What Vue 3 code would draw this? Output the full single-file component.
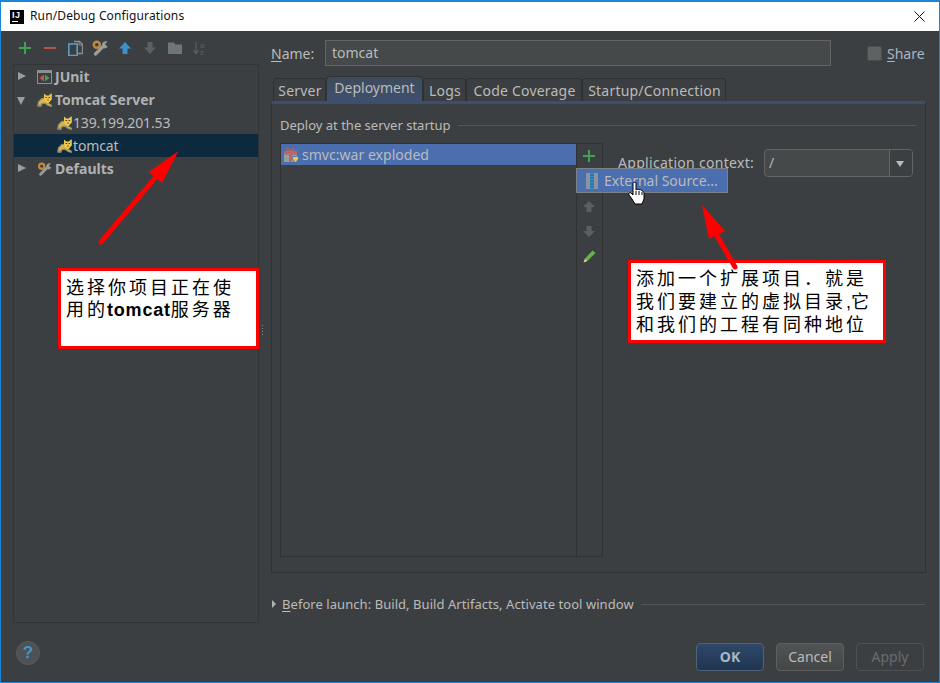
<script setup>
const tabs = [
  { label: 'Server', width: 53 },
  { label: 'Deployment', width: 97, active: true },
  { label: 'Logs', width: 43 },
  { label: 'Code Coverage', width: 116 },
  { label: 'Startup/Connection', width: 144 }
]
const toolbarIcons = ['plus', 'minus', 'copy', 'wrench', 'up', 'down', 'folder', 'sort']
const rows = [
  { label: 'JUnit', icon: 'junit', arrow: 'right', bold: true },
  { label: 'Tomcat Server', icon: 'cat', arrow: 'down', bold: true },
  { label: '139.199.201.53', icon: 'cat', child: true },
  { label: 'tomcat', icon: 'cat', child: true, selected: true },
  { label: 'Defaults', icon: 'wrench', arrow: 'right', bold: true }
]
</script>

<template>
  <div class="window">
    <svg class="defs" width="0" height="0" aria-hidden="true">
      <defs>
        <symbol id="cat" viewBox="0 0 15 14">
          <path d="M0 13.500 L1 8.500 L4.500 5 L9 4.500 L10.500 9 L15 12 L15 14 L11 13 L8 11 L5.500 11 L4 14 Z" fill="#8f8c76" />
          <path d="M1.500 11.500 L2.500 8.500 L5 6 L9 6 L10.500 10 L7 9.500 L4.500 10 L3 12 Z" fill="#dfb53c" />
          <path d="M7 .5 L9.300 2.500 H11.700 L14 .5 L14.800 .5 V6.500 L11.500 10 H10 L7 6.500 Z" fill="#ecc850" />
          <path d="M8.500 4.500 H10 M11.500 4.500 H13 M10.300 7 H11.700" stroke="#4a3d18" stroke-width="1" fill="none" />
          <path d="M9.500 10.500 L13.500 12.700" stroke="#dfb53c" stroke-width="1" fill="none" />
        </symbol>
        <symbol id="wrench" viewBox="0 0 16 16">
          <path d="M3.500 14 L12 5.500" stroke="#9a9c9e" stroke-width="3.200" stroke-linecap="round" />
          <path d="M10 4.500 C10.500 2 13 .8 15.500 1.500 L13 4 L13.500 5.500 L15.500 6 C15.500 8 13 9 11 8 Z" fill="#9a9c9e" />
          <circle cx="4.800" cy="4.800" r="3" fill="#3c3f41" stroke="#c08a3e" stroke-width="2.400" />
        </symbol>
      </defs>
    </svg>

    <header class="titlebar">
      <span class="logo"><span class="logo-text">IJ</span><i class="logo-bar"></i></span>
      <span class="title">Run/Debug Configurations</span>
      <svg class="close" width="11" height="11" viewBox="0 0 11 11">
        <path d="M.5 .5 L10.500 10.500 M10.500 .5 L.5 10.500" stroke="#111" stroke-width="1" />
      </svg>
    </header>

    <div class="main">
      <aside class="left">
        <div class="toolbar">
          <span v-for="name in toolbarIcons" :key="name" class="tool">
            <svg width="16" height="16" viewBox="0 0 16 16">
              <path v-if="name === 'plus'" d="M8 2 V14 M2 8 H14" stroke="#3fa34d" stroke-width="2" />
              <path v-else-if="name === 'minus'" d="M2 8 H14" stroke="#b8524d" stroke-width="2" />
              <g v-else-if="name === 'copy'" fill="none">
                <path d="M7 1.500 H12.500 L15.500 4.500 V13.500 H11" stroke="#8c9094" stroke-width="1.300" />
                <path d="M12 1.500 V5 H15.500" stroke="#8c9094" />
                <rect x="1.800" y="4" width="8.400" height="11.500" stroke="#5b9ac9" stroke-width="1.600" />
              </g>
              <use v-else-if="name === 'wrench'" href="#wrench" width="16" height="16" />
              <path v-else-if="name === 'up'" d="M8 2 L14 8.500 H10.500 V14 H5.500 V8.500 H2 Z" fill="#3b92c8" />
              <path v-else-if="name === 'down'" d="M8 14 L14 7.500 H10.500 V2 H5.500 V7.500 H2 Z" fill="#5c5f61" />
              <path v-else-if="name === 'folder'" d="M1 2.500 H7 L8.500 4.500 H15 V14 H1 Z" fill="#6d7679" />
              <g v-else>
                <path d="M4 2 V13 M1.500 10.500 L4 13.500 L6.500 10.500" fill="none" stroke="#5c5f61" stroke-width="1.200" />
                <text x="8" y="7.500" class="sort-text">a</text>
                <text x="8" y="15" class="sort-text">z</text>
              </g>
            </svg>
          </span>
        </div>
        <div class="tree">
          <div
            v-for="row in rows"
            :key="row.label"
            class="row"
            :class="{ selected: row.selected, child: row.child, bold: row.bold }"
          >
            <span v-if="!row.child" class="arrow" :class="row.arrow"></span>
            <svg v-if="row.icon === 'junit'" class="ticon" width="15" height="14" viewBox="0 0 15 14">
              <rect x=".5" y=".5" width="14" height="13" fill="#3c3f41" stroke="#8d9092" />
              <path d="M1 1 H14 V3 H1 Z" fill="#8d9092" />
              <path d="M7 4.500 V11.500 L2.500 8 Z" fill="#c75450" />
              <path d="M8 4.500 V11.500 L12.500 8 Z" fill="#499c54" />
            </svg>
            <svg v-else class="ticon" width="15" height="14"><use :href="'#' + row.icon" width="15" height="14" /></svg>
            <span class="rlabel">{{ row.label }}</span>
          </div>
        </div>
      </aside>

      <div class="splitter"><i></i></div>

      <section class="right">
        <div class="name-row">
          <label class="name-label"><u>N</u>ame:</label>
          <div class="field name-field">tomcat</div>
          <span class="share"><i class="check"></i><span class="share-text"><u>S</u>hare</span></span>
        </div>

        <div class="tabs">
          <div
            v-for="tab in tabs"
            :key="tab.label"
            class="tab"
            :class="{ active: tab.active }"
            :style="{ width: tab.width + 'px' }"
          >{{ tab.label }}</div>
        </div>

        <div class="panel">
          <div class="group-title"><span>Deploy at the server startup</span><i></i></div>
          <div class="deploy">
            <div class="list-box">
              <div class="list">
                <div class="list-item">
                  <svg width="16" height="16" viewBox="0 0 16 16">
                    <path d="M7.500 4 C6 1 3.500 .5 3.500 2.500 C3.500 4 6 4 7.500 4 C9 4 11.500 4 11.500 2.500 C11.500 .5 9 1 7.500 4 Z" fill="none" stroke="#c7635c" />
                    <rect x="1" y="4" width="13" height="3.500" fill="#c7635c" />
                    <rect x="1" y="7.500" width="13" height="7.500" fill="#9a9c9e" />
                    <rect x="6" y="4" width="3" height="11" fill="#c7635c" />
                    <path d="M9.500 9.500 H15.500 V12 L12.500 15.500 L9.500 12 Z" fill="#f2c94c" stroke="#4b6eaf" stroke-width=".8" />
                  </svg>
                  <span class="item-text">smvc:war exploded</span>
                </div>
              </div>
              <div class="side">
                <svg class="side-icon" width="16" height="16" viewBox="0 0 16 16"><path d="M8 2 V14 M2 8 H14" stroke="#3fa34d" stroke-width="2" /></svg>
                <svg class="side-icon" width="16" height="16" viewBox="0 0 16 16"><path d="M8 3 L14 9 H10.500 V14 H5.500 V9 H2 Z" fill="#5c5f61" /></svg>
                <svg class="side-icon" width="16" height="16" viewBox="0 0 16 16"><path d="M8 14 L14 8 H10.500 V3 H5.500 V8 H2 Z" fill="#5c5f61" /></svg>
                <svg class="side-icon" width="16" height="16" viewBox="0 0 16 16">
                  <path d="M4 10.500 L11.500 2.500 L14.500 5 L6.500 13 Z" fill="#62b543" />
                  <path d="M4 10.500 L6.500 13 L2.500 14.500 Z" fill="#e6d3a8" />
                </svg>
              </div>
              <div class="popup">
                <svg width="12" height="16" viewBox="0 0 12 16">
                  <rect x="0" y="0" width="12" height="16" fill="#8b95a2" />
                  <rect x="4" y="0" width="4" height="16" fill="#3b92c8" />
                  <path d="M4 2 H8 M4 5 H8 M4 8 H8 M4 11 H8 M4 14 H8" stroke="#1f5f8a" />
                </svg>
                <span>External Source...</span>
              </div>
            </div>
            <div class="context">
              <span class="context-label">Application context:</span>
              <div class="combo"><span class="combo-value">/</span><span class="combo-btn"><i></i></span></div>
            </div>
          </div>
        </div>

        <div class="before">
          <span class="before-arrow"></span>
          <span class="before-text"><u>B</u>efore launch: Build, Build Artifacts, Activate tool window</span>
          <i></i>
        </div>
      </section>
    </div>

    <footer class="footer">
      <span class="help">?</span>
      <div class="buttons">
        <button class="btn ok">OK</button>
        <button class="btn cancel">Cancel</button>
        <button class="btn apply">Apply</button>
      </div>
    </footer>

    <div class="note note-left">
      <div>选择你项目正在使</div>
      <div>用的<b>tomcat</b>服务器</div>
    </div>
    <div class="note note-right">
      <div>添加一个扩展项目．就是</div>
      <div>我们要建立的虚拟目录<span class="tight">,</span>它</div>
      <div>和我们的工程有同种地位</div>
    </div>

    <svg class="arrows" width="940" height="683" viewBox="0 0 940 683">
      <path d="M101 242 L155 178" stroke="#f00" stroke-width="5" stroke-linecap="round" />
      <path d="M178.500 151 L149 172 L162 183 Z" fill="#f00" />
      <path d="M735 267 L716 234" stroke="#f00" stroke-width="5" stroke-linecap="round" />
      <path d="M702 205 L709 239 L725 231 Z" fill="#f00" />
      <g transform="translate(628 182)">
        <path d="M5 1 C5 0 8 0 8 1 V8 C9 7 11 7 11 8 C12 7 14 8 14 9 C15 9 16 10 16 11 V17 L14 22 H7 L4 17 L1 13 C0 11 2 10 3 11 L5 13 Z" fill="#fff" stroke="#000" stroke-width="1" />
        <path d="M8 9 V13 M11 9 V13 M14 10 V13" stroke="#000" stroke-width="1" />
      </g>
    </svg>
  </div>
</template>

<style>
html, body { margin: 0; background: #3c3f41; }
</style>

<style scoped>
.window {
  position: relative;
  width: 940px;
  height: 683px;
  box-sizing: border-box;
  border: 1px solid #1b84d6;
  border-top-width: 2px;
  background: #3c3f41;
  color: #bbbbbb;
  font-family: "Noto Sans", "Open Sans", sans-serif;
  font-size: 14px;
  display: flex;
  flex-direction: column;
  overflow: hidden;
}
.defs { position: absolute; }
i { display: block; }
u { text-underline-offset: 2px; }

.titlebar {
  height: 29px;
  background: #fff;
  color: #111;
  display: flex;
  align-items: center;
  padding-left: 9px;
  padding-right: 14px;
  flex: none;
}
.logo {
  position: relative;
  width: 14px;
  height: 14px;
  background: #000;
  color: #fff;
  display: block;
}
.logo-text {
  position: absolute;
  left: 2px;
  top: 1px;
  font: bold 9px/9px "Liberation Sans", sans-serif;
  letter-spacing: .5px;
}
.logo-bar {
  position: absolute;
  left: 2px;
  bottom: 2px;
  width: 6px;
  height: 1px;
  background: #fff;
}
.title {
  margin-left: 6px;
  margin-bottom: 2px;
  font-size: 12px;
  letter-spacing: .13px;
  flex: 1;
}

.main { display: flex; height: 592px; flex: none; }
.left { width: 246px; padding-left: 12px; flex: none; display: flex; flex-direction: column; }
.toolbar { display: flex; height: 33px; padding-left: 4px; padding-top: 9px; box-sizing: border-box; flex: none; }
.tool { width: 25px; height: 16px; display: block; }
.sort-text { font: 8px "Liberation Sans", sans-serif; fill: #5c5f61; }
.tree {
  flex: 1;
  border: 1px solid #323437;
  padding: 0;
  width: 246px;
  box-sizing: border-box;
}
.row {
  height: 23px;
  display: flex;
  align-items: center;
  padding-left: 23px;
  position: relative;
  font-size: 14px;
  white-space: nowrap;
}
.row.bold { font-weight: 700; color: #afb1b3; }
.row.bold .rlabel { margin-left: 3px; }
.row.child { padding-left: 43px; }
.row.child .rlabel { margin-left: 1px; letter-spacing: -.15px; }
.row.selected { background: #0d293e; }
.arrow { position: absolute; left: 4px; top: 7px; width: 0; height: 0; }
.arrow.right { border-left: 8px solid #9a9c9e; border-top: 4.500px solid transparent; border-bottom: 4.500px solid transparent; }
.arrow.down { left: 3px; top: 9px; border-top: 8px solid #9a9c9e; border-left: 4.500px solid transparent; border-right: 4.500px solid transparent; }
.ticon { flex: none; }

.splitter { width: 12px; flex: none; position: relative; }
.splitter i {
  position: absolute;
  left: 2px;
  top: 293px;
  width: 3px;
  height: 13px;
  background-image: radial-gradient(#888 .6px, transparent .8px);
  background-size: 3px 3px;
}

.right { width: 655px; flex: none; display: flex; flex-direction: column; }
.name-row { display: flex; align-items: center; height: 26px; margin-top: 9px; flex: none; }
.name-label { width: 54px; flex: none; }
.field {
  background: #45494a;
  border: 1px solid #646464;
  box-sizing: border-box;
  color: #bbbbbb;
}
.name-field { width: 506px; height: 26px; line-height: 24px; padding-left: 6px; flex: none; }
.share { display: flex; align-items: center; margin-left: 36px; }
.check {
  width: 13px;
  height: 13px;
  background: #5f6263;
  border: 1px solid #4a4c4d;
  border-radius: 2px;
  flex: none;
}
.share-text { margin-left: 5px; color: #a9b7c6; }

.tabs { display: flex; height: 26px; margin-top: 10px; padding-left: 2px; align-items: flex-end; flex: none; font-size: 14px; letter-spacing: .2px; }
.tab {
  height: 24px;
  box-sizing: border-box;
  border: 1px solid #2f3133;
  border-bottom: none;
  border-radius: 4px 4px 0 0;
  padding-left: 1px;
  text-align: center;
  line-height: 23px;
  white-space: nowrap;
  background: #3c3f41;
}
.tab.active {
  height: 26px;
  background: linear-gradient(#3f4a5a, #3d5170);
  line-height: 22px;
  letter-spacing: 0;
  padding-left: 0;
}
.panel {
  height: 472px;
  margin-top: -1px;
  box-sizing: border-box;
  border: 1px solid #2f3133;
  border-top: 3px solid #3c4f6e;
  padding: 13px 9px 0 8px;
  flex: none;
  font-size: 13px;
}
.group-title { display: flex; align-items: center; height: 16px; font-size: 13px; }
.group-title i { flex: 1; height: 1px; background: #515658; margin-left: 7px; }
.deploy { display: flex; margin-top: 10px; }
.list-box {
  position: relative;
  width: 323px;
  height: 414px;
  box-sizing: border-box;
  border: 1px solid #2f3133;
  display: flex;
  flex: none;
}
.list { flex: 1; }
.list-item {
  height: 21px;
  background: #4b6eaf;
  display: flex;
  align-items: center;
  gap: 3px;
  padding-left: 2px;
  font-size: 14px;
  white-space: nowrap;
}
.item-text { letter-spacing: .03px; }
.side {
  width: 26px;
  border-left: 1px solid #2f3133;
  display: flex;
  flex-direction: column;
  align-items: center;
  padding-top: 4px;
  padding-right: 1px;
  box-sizing: border-box;
  flex: none;
}
.side-icon { display: block; margin-bottom: 9px; flex: none; }
.side-icon:first-child { margin-bottom: 34px; }
.popup {
  position: absolute;
  left: 295px;
  top: 24px;
  width: 152px;
  height: 25px;
  box-sizing: border-box;
  background: #4b6eaf;
  border: 1px solid #7c8288;
  display: flex;
  align-items: center;
  gap: 6px;
  padding-left: 9px;
  font-size: 14px;
  white-space: nowrap;
}
.context { display: flex; align-items: flex-start; margin-left: 15px; flex: none; }
.context-label { margin-top: 10px; font-size: 14px; line-height: 19px; letter-spacing: .3px; width: 146px; white-space: nowrap; flex: none; }
.combo {
  margin-top: 6px;
  width: 149px;
  height: 28px;
  box-sizing: border-box;
  background: #45494a;
  border: 1px solid #646464;
  border-radius: 4px;
  display: flex;
  font-size: 14px;
}
.combo-value { flex: 1; padding-left: 4px; line-height: 26px; color: #a9b7c6; }
.combo-btn { width: 22px; border-left: 1px solid #646464; position: relative; background: #3c3f41; border-radius: 0 3px 3px 0; }
.combo-btn i {
  position: absolute;
  left: 6px;
  top: 11px;
  width: 0;
  height: 0;
  border-top: 6px solid #bbbbbb;
  border-left: 4px solid transparent;
  border-right: 4px solid transparent;
}

.before { display: flex; align-items: center; height: 18px; margin-top: 22px; font-size: 13px; white-space: nowrap; flex: none; }
.before-arrow {
  width: 0;
  height: 0;
  border-left: 4px solid #afb1b3;
  border-top: 4px solid transparent;
  border-bottom: 4px solid transparent;
  margin: 0 6px 0 1px;
}
.before-text { letter-spacing: .055px; }
.before i { width: 284px; height: 1px; background: #515658; margin-left: 7px; }

.footer { flex: 1; position: relative; display: flex; align-items: flex-start; }
.help {
  position: absolute;
  left: 15px;
  top: 18px;
  width: 24px;
  height: 24px;
  border-radius: 50%;
  background: #4e5254;
  border: 1px solid #555a5d;
  box-sizing: border-box;
  color: #3f97cf;
  font: bold 17px/22px "Liberation Sans", sans-serif;
  text-align: center;
}
.buttons { margin-left: 695px; margin-top: 20px; display: flex; gap: 12px; }
.btn {
  width: 68px;
  height: 28px;
  padding: 0 0 2px;
  box-sizing: border-box;
  border: 1px solid #5e6060;
  border-radius: 4px;
  font-family: inherit;
  font-size: 14px;
  background: #4a4e50;
  color: #bbbbbb;
}
.btn.ok { background: linear-gradient(#2f4868, #1f3652); border-color: #50617a; font-weight: 700; color: #a9b7c6; }
.btn.cancel { background: linear-gradient(#505455, #434748); }
.btn.apply { background: transparent; color: #6a6c6e; border-color: #4f5254; }

.note {
  position: absolute;
  box-sizing: border-box;
  background: #fff;
  border: 3px solid #f00;
  color: #000;
  font-family: "Liberation Sans", "Noto Sans CJK SC", sans-serif;
  font-size: 18px;
  white-space: nowrap;
}
.note-left {
  left: 57px;
  top: 266px;
  width: 201px;
  height: 81px;
  padding: 6px 0 0 5px;
  line-height: 22px;
  letter-spacing: 3px;
}
.note-left b {
  letter-spacing: .8px;
  margin-left: -1px;
}
.note-right {
  left: 627px;
  top: 258px;
  width: 258px;
  height: 83px;
  padding: 5px 0 0 5px;
  line-height: 23px;
  letter-spacing: 3px;
}
.tight { letter-spacing: 0; }
.arrows { position: absolute; left: -1px; top: -2px; pointer-events: none; }
</style>
